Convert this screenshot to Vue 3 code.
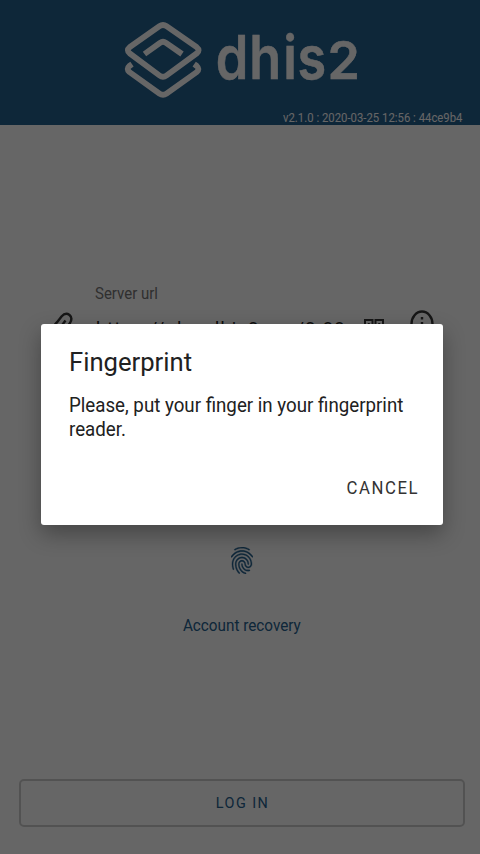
<script setup>
const version = 'v2.1.0 : 2020-03-25 12:56 : 44ce9b4'
const serverUrl = 'https://play.dhis2.org/2.33'
</script>

<template>
  <div class="screen">
    <header class="header">
      <svg class="logo" viewBox="120 15 244 90" role="img" aria-label="dhis2">
        <g class="mark">
          <path d="M159.5 26.2Q163 23.800 166.500 26.200L196.700 47.200Q200.500 50.300 196.700 53.400L166.500 75.500Q163 78 159.500 75.500L129.700 53.400Q126 50.300 129.700 47.200Z" />
          <path d="M144.500 54L160 42.800Q163 40.800 166 42.800L182 54" />
          <path d="M132 64.200L129.400 66Q126 69 129.400 72L159.500 93.600Q163 96 166.500 93.600L196.800 72Q200 69 196.800 66L194.200 64.200" />
        </g>
        <g class="wordmark" transform="translate(218 79) scale(.87 1)">
          <text x="-2.500">d</text><text x="36">h</text><text x="75">i</text><text x="91.500">s</text>
        </g>
        <text class="wordmark two" x="327.500" y="79">2</text>
      </svg>
      <div class="version"><span>{{ version }}</span></div>
    </header>

    <main class="form">
      <div class="label"><span>Server url</span></div>
      <div class="field">
        <svg class="link" viewBox="0 0 22 26">
          <path d="M8 16L13.500 8.500M4.500 11L9.500 4.500Q13.500 0 17.500 3Q21 6 18 11L13 18M5 10Q0 15 2 19Q5 24 11 19" />
        </svg>
        <div class="url"><span>{{ serverUrl }}</span></div>
        <svg class="qr" viewBox="0 0 20 22">
          <path d="M1 1h7.500v8H1zM11.500 1H19v8h-7.500zM1 13h7.500v8H1zM4.800 4v3M15.200 4v3M12 13h3v3M18 13v8" />
        </svg>
        <svg class="info" viewBox="0 0 24 28">
          <ellipse cx="12" cy="14" rx="10.500" ry="12.500" />
          <path d="M12 7v2.400M12 12v9" />
        </svg>
      </div>
      <svg class="finger" viewBox="3 2 18 20" preserveAspectRatio="none">
        <path d="M17.810 4.470c-.08 0-.16-.02-.23-.06C15.660 3.420 14 3 12.010 3c-1.980 0-3.860.47-5.570 1.410-.24.13-.54.04-.68-.2-.13-.24-.04-.55.2-.68C7.820 2.520 9.860 2 12.010 2c2.130 0 3.990.47 6.030 1.520.25.13.34.43.21.67-.09.18-.26.28-.44.28zM3.500 9.720c-.1 0-.2-.03-.29-.09-.23-.16-.28-.47-.12-.7.99-1.400 2.250-2.500 3.750-3.270C9.980 4.040 14 4.030 17.150 5.650c1.500.77 2.760 1.860 3.750 3.250.16.22.11.54-.12.7-.23.16-.54.11-.7-.12-.9-1.260-2.040-2.250-3.390-2.940-2.870-1.470-6.540-1.470-9.400.01-1.360.7-2.500 1.700-3.400 2.960-.08.14-.23.21-.39.21zm6.250 12.070c-.13 0-.26-.05-.35-.15-.87-.87-1.340-1.430-2.010-2.640-.69-1.230-1.050-2.730-1.050-4.340 0-2.970 2.540-5.390 5.660-5.390s5.660 2.420 5.660 5.390c0 .28-.22.5-.5.5s-.5-.22-.5-.5c0-2.420-2.090-4.390-4.660-4.390-2.570 0-4.660 1.970-4.660 4.390 0 1.440.32 2.770.93 3.850.64 1.150 1.080 1.640 1.850 2.420.19.2.19.51 0 .71-.11.1-.24.15-.37.15zm7.170-1.850c-1.190 0-2.240-.3-3.100-.89-1.490-1.010-2.380-2.650-2.380-4.390 0-.28.22-.5.5-.5s.5.22.5.5c0 1.410.72 2.740 1.940 3.560.71.48 1.540.71 2.540.71.24 0 .64-.03 1.040-.1.27-.05.53.13.58.41.05.27-.13.53-.41.58-.57.11-1.070.12-1.210.12zM14.910 22c-.04 0-.09-.01-.13-.02-1.590-.44-2.630-1.030-3.720-2.100-1.400-1.390-2.170-3.240-2.170-5.220 0-1.620 1.380-2.940 3.080-2.940 1.700 0 3.080 1.320 3.080 2.940 0 1.070.93 1.940 2.080 1.940s2.080-.87 2.080-1.940c0-3.770-3.250-6.830-7.250-6.830-2.840 0-5.440 1.580-6.610 4.030-.39.81-.59 1.760-.59 2.800 0 .78.07 2.010.67 3.610.1.26-.03.55-.29.64-.26.1-.55-.04-.64-.29-.49-1.310-.73-2.610-.73-3.960 0-1.200.23-2.290.68-3.240 1.330-2.790 4.280-4.600 7.510-4.600 4.550 0 8.250 3.510 8.250 7.830 0 1.620-1.380 2.940-3.080 2.940s-3.080-1.320-3.080-2.940c0-1.070-.93-1.940-2.080-1.940s-2.080.87-2.080 1.940c0 1.710.66 3.310 1.870 4.510.95.94 1.860 1.460 3.270 1.850.27.07.42.35.35.61-.05.23-.26.38-.47.38z" />
      </svg>
      <a class="recovery"><span>Account recovery</span></a>
      <button class="login"><span>LOG IN</span></button>
    </main>

    <div class="scrim">
      <section class="dialog" role="dialog">
        <h1 class="title"><span>Fingerprint</span></h1>
        <p class="message"><span>Please, put your finger in your fingerprint<br />reader.</span></p>
        <div class="actions"><button class="cancel"><span>CANCEL</span></button></div>
      </section>
    </div>
  </div>
</template>

<style>
body { margin: 0; }
</style>

<style scoped>
.screen {
  position: relative;
  display: flex;
  flex-direction: column;
  width: 480px;
  height: 854px;
  overflow: hidden;
  background: #fff;
  font-family: Roboto, "Liberation Sans", sans-serif;
  white-space: nowrap;
}
span { display: inline-block; transform-origin: 0 50%; }
button { border: 0; margin: 0; padding: 0; background: none; font-family: inherit; }

.header {
  box-sizing: border-box;
  height: 125px;
  padding: 15px 0 0 120px;
  background: #25618f;
}
.logo { display: block; width: 244px; height: 90px; }
.mark { fill: none; stroke: #fff; stroke-width: 5.800; stroke-linejoin: round; }
.wordmark { font: 600 60px Inter, sans-serif; fill: #fff; stroke: #fff; stroke-width: .5; }
.two { font-size: 52px; }
.version {
  margin-left: 163px;
  padding-top: 6px;
  font-size: 12px;
  line-height: 14px;
  color: #fff;
}
.version span { transform: scaleX(.945); }

.form {
  display: flex;
  flex: 1;
  flex-direction: column;
  align-items: center;
  padding: 159px 15px 27px 19px;
}
.label { align-self: flex-start; margin-left: 76px; font-size: 15px; line-height: 18px; color: #777; }
.label span { transform: translateY(.5px) scaleY(1.05); }
.field { display: flex; align-self: stretch; height: 30px; margin-top: 8px; padding-left: 33px; }
.link, .qr, .info { fill: none; stroke: #383838; stroke-width: 2.400; flex: none; }
.link { width: 22px; height: 26px; margin-top: 2px; }
.url { width: 267px; margin: 8px 0 0 22px; font-size: 18px; line-height: 22px; letter-spacing: 1.400px; color: #222; }
.qr { width: 20px; height: 22px; margin: 9px 0 0 1px; stroke-width: 2; }
.info { width: 24px; height: 28px; margin: 0 0 0 26px; }
.finger { width: 22px; height: 27px; margin-top: 207px; fill: #25618f; stroke: #25618f; stroke-width: .25; }
.recovery { margin-top: 42px; font-size: 15.500px; line-height: 20px; color: #25618f; }
.recovery span { transform: scale(.985, 1.04); transform-origin: 50% 50%; }
.login {
  box-sizing: border-box;
  width: 446px;
  height: 48px;
  margin-top: auto;
  border: 2px solid #cecece;
  border-radius: 5px;
  font-size: 15px;
  letter-spacing: 1.500px;
  color: #25618f;
}
.login span { transform: translateX(.7px) scaleX(.96); transform-origin: 50% 50%; }

.scrim { position: absolute; inset: 0; background: rgba(0, 0, 0, .6); }
.dialog {
  box-sizing: border-box;
  width: 402px;
  height: 201px;
  margin: 324px 0 0 41px;
  padding: 23.500px 24px 20px 28px;
  border-radius: 3px;
  background: #fff;
  box-shadow: 0 9px 22px rgba(0, 0, 0, .32);
  color: #212121;
}
.title { margin: 0; font-size: 25px; font-weight: 400; line-height: 30px; }
.title span { transform: scaleX(1.025); }
.message { margin: 15.500px 0 0; font-size: 20.500px; line-height: 24px; }
.message span { transform: scaleX(.913); }
.actions { display: flex; justify-content: flex-end; margin-top: 36px; }
.cancel { font-size: 18px; line-height: 22px; letter-spacing: 1.700px; color: #333; }
.cancel span { transform: scaleX(.93); transform-origin: 100% 50%; }
</style>
